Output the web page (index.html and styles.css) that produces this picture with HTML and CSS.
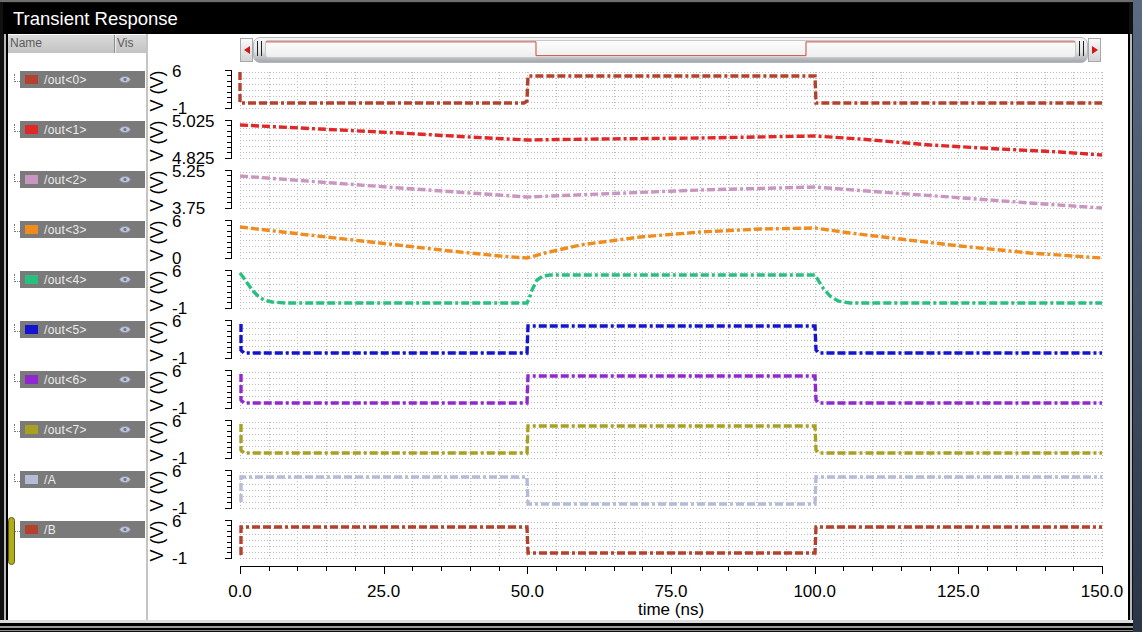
FILE: index.html
```html
<!DOCTYPE html>
<html lang="en">
<head>
    <meta charset="UTF-8">
    <title>Transient Response</title>
    <link rel="stylesheet" href="styles.css">
</head>
<body>
    <div class="window">
        <div class="title">Transient Response</div>
        <div class="main">
            <div class="legend">
                <div class="legend-head">
                    <span class="col-name">Name</span>
                    <span class="col-vis">Vis</span>
                </div>
                <div class="legend-list" id="legend"></div>
                <div class="handle"></div>
            </div>
            <div class="plot">
                <div class="scroll">
                    <div class="arrow arrow-left"></div>
                    <div class="thumb">
                        <span class="grip"></span>
                        <div class="track">
                            <svg viewBox="0 0 815 18" preserveAspectRatio="none">
                                <polyline points="0,1 272,1 272,16.5 544,16.5 544,1 815,1" fill="none" stroke="#c04030" stroke-width="1"/>
                            </svg>
                        </div>
                        <span class="grip"></span>
                    </div>
                    <div class="arrow arrow-right"></div>
                </div>
                <svg id="chart" class="chart" width="979" height="557" viewBox="148 63 979 557"></svg>
            </div>
        </div>
        <div class="frame-bottom"></div>
    </div>

    <script>
        const X0 = 240, X1 = 1102;
        const tx = t => X0 + (X1 - X0) * t / 150;

        // y values are offsets from the top of each strip
        const strips = [
            { name: '/out<0>', color: '#b4412d', hi: '6', lo: '-1',
              pts: [[240,0],[240,31],[524,31],[527,29],[528,4],[815,4],[816,31],[1102,31]] },
            { name: '/out<1>', color: '#e02828', hi: '5.025', lo: '4.825',
              pts: [[240,3],[320,7],[400,11],[470,15],[527,18],[600,17],[700,16],[815,14],[860,17],[930,23],[1000,27],[1060,30],[1102,33]] },
            { name: '/out<2>', color: '#c896c0', hi: '5.25', lo: '3.75',
              pts: [[240,4],[320,10],[400,16],[470,21],[527,25],[600,22],[700,18],[815,15],[880,20],[950,25],[1030,31],[1102,36]] },
            { name: '/out<3>', color: '#f08c1e', hi: '6', lo: '0',
              pts: [[240,5],[300,12],[380,21],[450,29],[500,34],[527,36],[545,31],[580,23],[640,15],[700,10],[760,7],[815,6],[850,11],[900,17],[960,24],[1030,31],[1102,36]] },
            { name: '/out<4>', color: '#28c080', hi: '6', lo: '-1',
              pts: [[240,1],[243,5],[248,12],[253,19],[258,24],[264,28],[272,30],[285,31],[527,31],[529,27],[532,18],[537,8],[543,4],[550,3],[815,3],[818,8],[823,16],[830,24],[838,29],[850,31],[1102,31]] },
            { name: '/out<5>', color: '#1414d0', hi: '6', lo: '-1',
              pts: [[241,2],[241,28],[244,31],[527,31],[528,4],[815,4],[816,28],[819,31],[1102,31]] },
            { name: '/out<6>', color: '#9028d0', hi: '6', lo: '-1',
              pts: [[241,2],[241,28],[244,31],[527,31],[528,4],[815,4],[816,28],[819,31],[1102,31]] },
            { name: '/out<7>', color: '#a8a020', hi: '6', lo: '-1',
              pts: [[241,2],[241,28],[244,31],[527,31],[528,4],[815,4],[816,28],[819,31],[1102,31]] },
            { name: '/A', color: '#b4bcd8', hi: '6', lo: '-1',
              pts: [[241,30],[241,5],[527,5],[528,32],[815,32],[816,5],[1102,5]] },
            { name: '/B', color: '#b4412d', hi: '6', lo: '-1',
              pts: [[241,33],[241,5],[527,5],[528,31],[815,31],[816,5],[1102,5]] }
        ];

        const eye = '<svg class="eye" width="12" height="7" viewBox="0 0 12 7">' +
            '<ellipse cx="6" cy="3.5" rx="5.2" ry="3" fill="#c4c8d6" stroke="#8a92ac" stroke-width="1"/>' +
            '<circle cx="6" cy="3.5" r="1.6" fill="#6a7290"/></svg>';

        let legend = '';
        let svg = '';

        strips.forEach((s, i) => {
            const y0 = 72 + 50 * i;

            legend += `<div class="item"><span class="swatch" style="background:${s.color}"></span>` +
                `<span class="label">${s.name.replace(/</g, '&lt;').replace(/>/g, '&gt;')}</span>${eye}</div>`;

            // dotted grid
            for (let k = 0; k <= 6; k++) {
                const y = y0 + k * 6 + 0.5;
                svg += `<line class="grid" x1="${X0}" y1="${y}" x2="${X1}" y2="${y}"/>`;
            }
            for (let j = 0; j <= 30; j++) {
                const x = Math.round(tx(j * 5)) + 0.5;
                svg += `<line class="grid" x1="${x}" y1="${y0}" x2="${x}" y2="${y0 + 36}"/>`;
            }

            // y axis ticks
            svg += `<line class="axis" x1="231.5" y1="${y0 - 2}" x2="231.5" y2="${y0 + 36}"/>`;
            for (let k = 0; k <= 7; k++) {
                const y = Math.round(y0 - 2 + k * 5.4) + 0.5;
                const x = (k === 0 || k === 7) ? 225 : 227;
                svg += `<line class="axis" x1="${x}" y1="${y}" x2="232" y2="${y}"/>`;
            }

            // labels
            svg += `<text class="num" x="172" y="${y0 - 1}">${s.hi}</text>`;
            svg += `<text class="num" x="172" y="${y0 + 36}">${s.lo}</text>`;
            svg += `<text class="unit" x="157" y="${y0 + 19}" transform="rotate(-90 157 ${y0 + 19})">V (V)</text>`;

            // waveform
            const pts = s.pts.map(p => `${p[0]},${y0 + p[1]}`).join(' ');
            svg += `<polyline class="wave" points="${pts}" stroke="${s.color}"/>`;
        });

        // time axis
        svg += `<line class="axis" x1="${X0}" y1="566.5" x2="${X1}" y2="566.5"/>`;
        for (let j = 0; j <= 30; j++) {
            const x = Math.round(tx(j * 5)) + 0.5;
            const major = j % 5 === 0;
            svg += `<line class="axis" x1="${x}" y1="566" x2="${x}" y2="${major ? 574 : 571}"/>`;
            if (major) {
                svg += `<text class="tick" x="${tx(j * 5)}" y="591">${(j * 5).toFixed(1)}</text>`;
            }
        }
        svg += `<text class="tick" x="671" y="609">time (ns)</text>`;

        document.getElementById('legend').innerHTML = legend;
        document.getElementById('chart').innerHTML = svg;
    </script>
</body>
</html>
```

FILE: styles.css
```css
* {
    margin: 0;
    padding: 0;
    box-sizing: border-box;
}

body {
    width: 1142px;
    height: 632px;
    overflow: hidden;
    background: linear-gradient(#5a6b82, #2a3646);
    font-family: 'Liberation Sans', Arial, sans-serif;
}

.window {
    width: 1133px;
    height: 632px;
    background: #111;
    border-top: 2px solid #6e6e6e;
    padding: 1px 5px 0 3px;
}

.title {
    height: 31px;
    line-height: 31px;
    background: #000;
    color: #fff;
    font-size: 18.5px;
    padding-left: 10px;
    margin-right: -1px;
}

.main {
    display: flex;
    height: 586px;
    margin-left: 5px;
    background: #fff;
    box-shadow: -2px 0 0 #000, -4px 0 0 #b8b8b8, 2px 0 0 #000, 4px 0 0 #b8b8b8;
}

.legend {
    width: 140px;
    border-right: 2px solid #c4c4c4;
    position: relative;
}

.legend-head {
    display: flex;
    height: 18px;
    margin-top: 1px;
    background: linear-gradient(#dadada, #c2c2c2);
    color: #5a5a5a;
    font-size: 12px;
    line-height: 17px;
}

.col-name {
    width: 107px;
    padding-left: 2px;
    border-right: 1px solid #8c8c8c;
    box-shadow: 1px 0 0 #ececec;
}

.col-vis {
    padding-left: 2px;
}

.legend-list {
    display: flex;
    flex-direction: column;
    gap: 33px;
    padding-top: 18px;
}

.item {
    position: relative;
    display: flex;
    align-items: center;
    height: 17px;
    margin-left: 12px;
    width: 125px;
    background: #7a7a7a;
    padding-left: 5px;
}

.item::before {
    content: '';
    position: absolute;
    left: -6px;
    top: 3px;
    width: 5px;
    height: 7px;
    border-left: 1px dotted #777;
    border-bottom: 1px dotted #777;
}

.swatch {
    width: 13px;
    height: 9px;
    flex-shrink: 0;
}

.label {
    margin-left: 6px;
    flex: 1;
    color: #ececec;
    font-size: 12px;
    letter-spacing: 0.3px;
}

.eye {
    margin-right: 14px;
}

.handle {
    position: absolute;
    left: 0;
    top: 483px;
    width: 7px;
    height: 48px;
    border-radius: 4px;
    background: #b2ac1c;
    border: 1px solid #5c5a10;
}

.plot {
    flex: 1;
    display: flex;
    flex-direction: column;
}

.scroll {
    display: flex;
    width: 861px;
    height: 26px;
    margin: 3px 0 0 92px;
}

.arrow {
    width: 13px;
    height: 24px;
    margin-top: 1px;
    border: 1px solid #a8a8a8;
    background: linear-gradient(#fafafa, #d4d4d4);
    display: flex;
    align-items: center;
    justify-content: center;
}

.arrow::after {
    content: '';
    border-top: 4px solid transparent;
    border-bottom: 4px solid transparent;
}

.arrow-left::after {
    border-right: 6px solid #d01818;
}

.arrow-right::after {
    border-left: 6px solid #d01818;
}

.thumb {
    flex: 1;
    display: flex;
    align-items: center;
    gap: 3px;
    padding: 0 3px 3px 3px;
    border-radius: 7px;
    border: 1px solid #b4b8be;
    background: linear-gradient(#f6f6f6, #e2e4e6 55%, #a4a8ae);
}

.grip {
    width: 5px;
    height: 15px;
    border-left: 1px solid #222;
    border-right: 1px solid #222;
}

.track {
    flex: 1;
    height: 18px;
    border: 1px solid #c8c8c8;
    border-radius: 3px;
    background: linear-gradient(#fdfdfd, #eeeeee);
}

.track svg {
    display: block;
    width: 100%;
    height: 100%;
}

.chart {
    display: block;
}

.chart .grid {
    stroke: #bcbcbc;
    stroke-width: 1;
    stroke-dasharray: 1 2;
}

.chart .axis {
    stroke: #000;
    stroke-width: 1;
}

.chart .wave {
    fill: none;
    stroke-width: 3.4;
    stroke-dasharray: 8 3 8 3 8 3 3 3;
}

.chart .num {
    font-size: 17px;
    dominant-baseline: central;
}

.chart .unit {
    font-size: 18px;
    text-anchor: middle;
    dominant-baseline: central;
}

.chart .tick {
    font-size: 17px;
    text-anchor: middle;
    dominant-baseline: central;
}

.frame-bottom {
    height: 11px;
    margin: 0 -5px 0 -3px;
    background: linear-gradient(#dcdcdc 0 3px, #000 3px 6px, #9a9a9a 6px 8px, #000 8px 10px, #8a8a8a 10px);
}
```
